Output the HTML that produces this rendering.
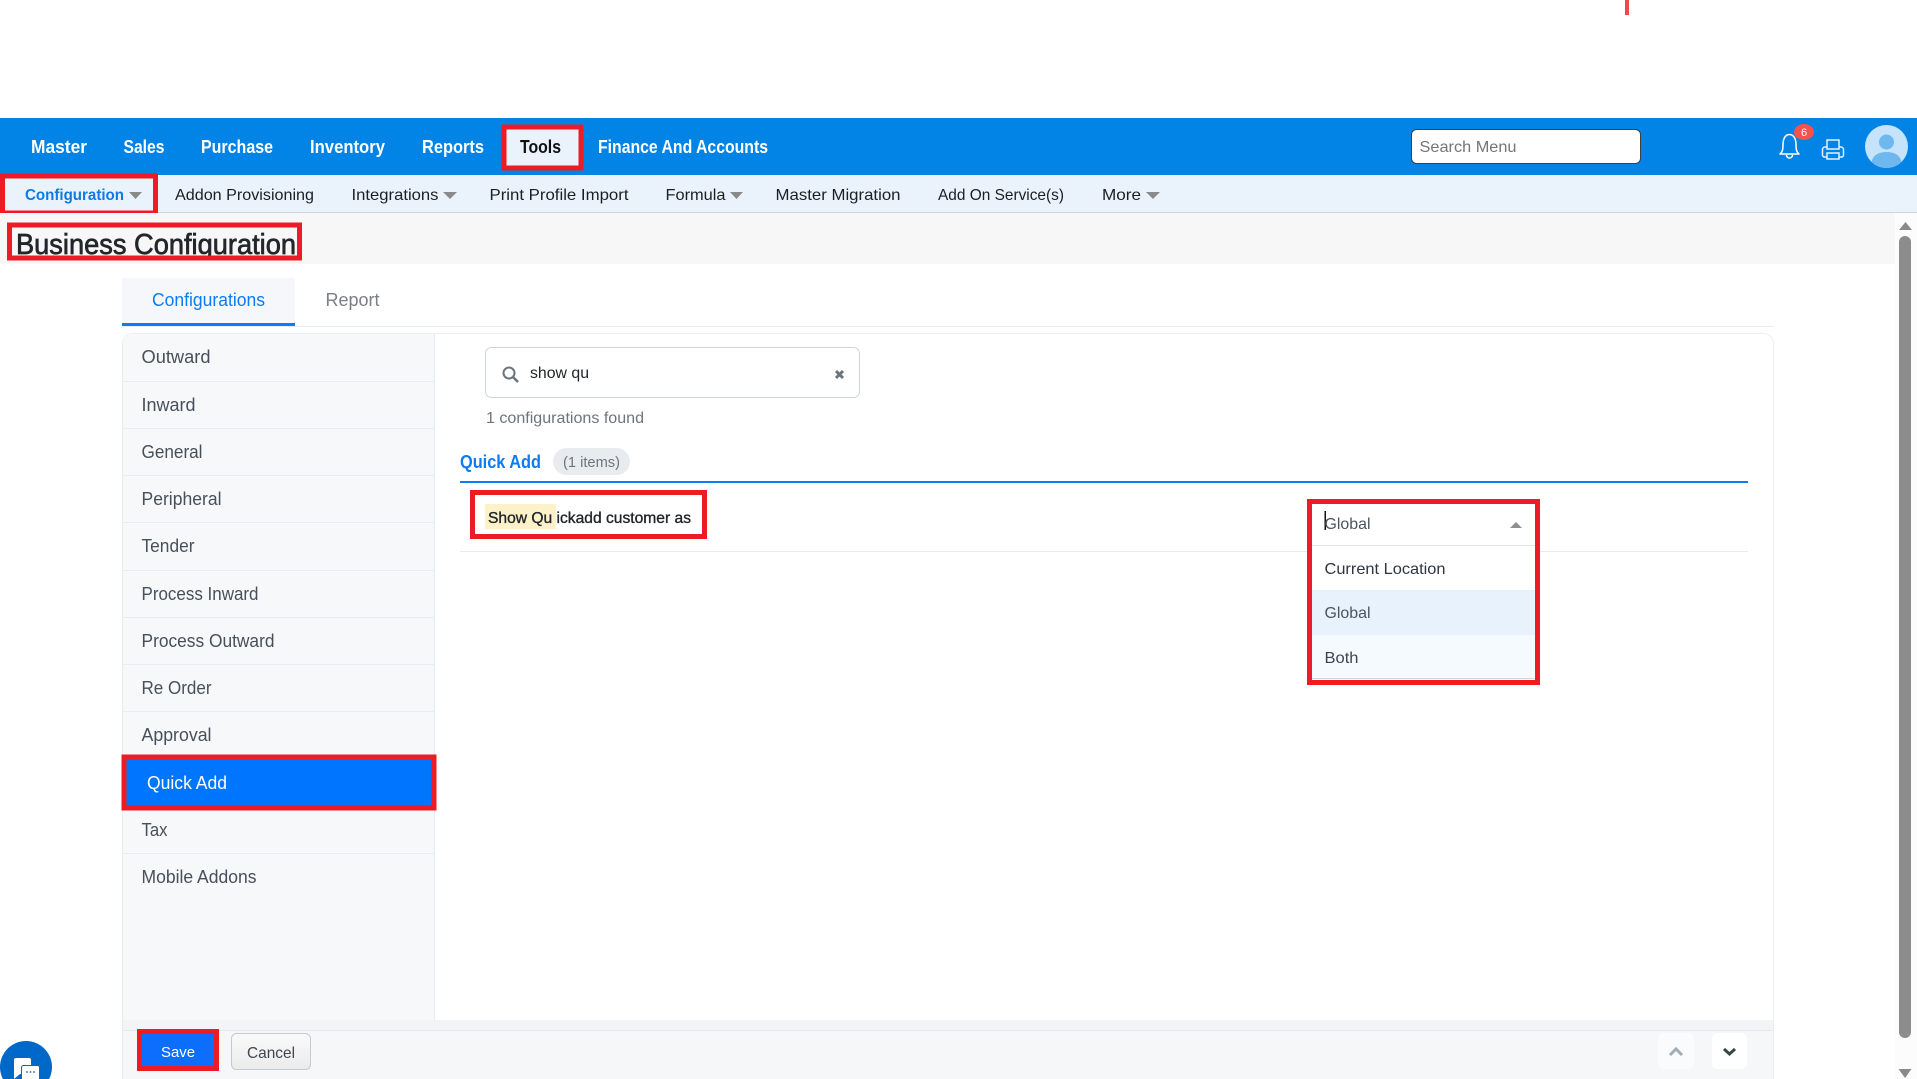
<!DOCTYPE html>
<html lang="en">
<head>
<meta charset="utf-8">
<title>Business Configuration</title>
<style>
html,body{margin:0;padding:0;background:#fff;width:1917px;height:1079px;overflow:hidden}
svg{display:block}
text{font-family:"Liberation Sans",sans-serif;white-space:pre}
.n{font-size:18px;font-weight:700;fill:#fff}
.s{font-size:16px;fill:#1b1f24}
.r{font-size:18px;fill:#47505a}
.b{fill:none;stroke:#ed1c24;stroke-width:5}
.h{fill:#eaedf0}
</style>
</head>
<body>
<svg width="1917" height="1079" viewBox="0 0 1917 1079" xmlns="http://www.w3.org/2000/svg">
<rect width="1917" height="1079" fill="#fff"/>
<rect x="1625" y="0" width="4" height="15" fill="#ee4b44"/>

<!-- top bar -->
<rect y="118" width="1917" height="57" fill="#0283e6"/>
<rect x="503" y="127" width="77" height="41" fill="#eaf3fb"/>
<text class="n" x="31" y="153" textLength="56" lengthAdjust="spacingAndGlyphs">Master</text>
<text class="n" x="123.500" y="153" textLength="41" lengthAdjust="spacingAndGlyphs">Sales</text>
<text class="n" x="201" y="153" textLength="72" lengthAdjust="spacingAndGlyphs">Purchase</text>
<text class="n" x="310" y="153" textLength="75" lengthAdjust="spacingAndGlyphs">Inventory</text>
<text class="n" x="422" y="153" textLength="62" lengthAdjust="spacingAndGlyphs">Reports</text>
<text class="n" x="520" y="153" textLength="41" lengthAdjust="spacingAndGlyphs" style="fill:#111">Tools</text>
<text class="n" x="598" y="153" textLength="170" lengthAdjust="spacingAndGlyphs">Finance And Accounts</text>
<rect class="b" x="504" y="127" width="77" height="41"/>

<!-- search menu -->
<rect x="1411.500" y="129.500" width="229" height="34" rx="5" fill="#fff" stroke="#3c4043"/>
<text x="1419.500" y="152" font-size="16" fill="#757575" textLength="97" lengthAdjust="spacingAndGlyphs">Search Menu</text>

<!-- bell -->
<path d="M1780 154c2.500-2 3-4.500 3-9.500c0-6 2.500-10 6.500-10s6.500 4 6.500 10c0 5 .5 7.500 3 9.500z" fill="none" stroke="#fff" stroke-width="1.500" stroke-linejoin="round"/>
<path d="M1786.500 155a3 3 0 0 0 6 0" fill="none" stroke="#fff" stroke-width="1.500"/>
<ellipse cx="1804" cy="132" rx="10" ry="8" fill="#f4524d"/>
<text x="1804" y="136" font-size="11" fill="#fff" text-anchor="middle">6</text>
<!-- printer -->
<g fill="none" stroke="#e3f1fc" stroke-width="1.500">
<rect x="1827" y="140" width="12" height="9"/>
<path d="M1827 147h-2a2.500 2.500 0 0 0-2.500 2.500v5.500a2 2 0 0 0 2 2h17a2 2 0 0 0 2-2v-5.500a2.500 2.500 0 0 0-2.500-2.500h-2"/>
<rect x="1827" y="153" width="12" height="6" fill="#0283e6"/>
</g>
<!-- avatar -->
<circle cx="1886.500" cy="146.500" r="21.500" fill="#c5e4fb"/>
<circle cx="1886.500" cy="142" r="7.500" fill="#6fb7ef"/>
<path d="M1871.500 162c1.500-7 7-10 15-10s13.500 3 15 10a21.500 21.500 0 0 1-30 0z" fill="#6fb7ef"/>

<!-- sub nav -->
<rect y="175" width="1917" height="37" fill="#eaf3fb"/>
<rect y="212" width="1917" height="1" fill="#c8d6e2"/>
<text class="s" x="25" y="200" textLength="99" lengthAdjust="spacingAndGlyphs" style="fill:#0d7be5;font-weight:700">Configuration</text>
<path d="M129 192h13l-6.500 7z" fill="#8a8a8a"/>
<text class="s" x="175" y="200" textLength="139" lengthAdjust="spacingAndGlyphs">Addon Provisioning</text>
<text class="s" x="351.500" y="200" textLength="87" lengthAdjust="spacingAndGlyphs">Integrations</text>
<path d="M443 192h14l-7 7z" fill="#8a8a8a"/>
<text class="s" x="489.500" y="200" textLength="139" lengthAdjust="spacingAndGlyphs">Print Profile Import</text>
<text class="s" x="665.500" y="200" textLength="60" lengthAdjust="spacingAndGlyphs">Formula</text>
<path d="M730 192h13l-6.500 7z" fill="#8a8a8a"/>
<text class="s" x="775.500" y="200" textLength="125" lengthAdjust="spacingAndGlyphs">Master Migration</text>
<text class="s" x="938" y="200" textLength="126" lengthAdjust="spacingAndGlyphs">Add On Service(s)</text>
<text class="s" x="1102" y="200" textLength="39" lengthAdjust="spacingAndGlyphs">More</text>
<path d="M1146 192h14l-7 7z" fill="#8a8a8a"/>
<rect class="b" x="2.500" y="176" width="153" height="37"/>

<!-- page header -->
<rect y="213" width="1895" height="51" fill="#f7f7f7"/>
<text x="16" y="254" font-size="29" fill="#23272b" stroke="#23272b" stroke-width=".7" textLength="280" lengthAdjust="spacingAndGlyphs">Business Configuration</text>
<rect class="b" x="9.500" y="225" width="290" height="33"/>

<!-- scrollbar -->
<rect x="1895" y="213" width="22" height="866" fill="#fcfcfc"/>
<path d="M1899 230l6.500-8l6.500 8z" fill="#8a8a8a"/>
<rect x="1899" y="236" width="12" height="802" rx="6" fill="#8c8c8c"/>
<path d="M1898.500 1069h13l-6.500 9z" fill="#8a8a8a"/>

<!-- tabs -->
<rect x="122" y="278" width="173" height="45" fill="#f5f7fa"/>
<rect x="122" y="326" width="1652" height="1" fill="#eaecef"/>
<rect x="122" y="323" width="173" height="3" fill="#0d7bf2"/>
<text x="152" y="306" font-size="18" fill="#0d7bf2" textLength="113" lengthAdjust="spacingAndGlyphs">Configurations</text>
<text x="325.500" y="306" font-size="18" fill="#7a7f85" textLength="54" lengthAdjust="spacingAndGlyphs">Report</text>

<!-- panel -->
<rect x="122.500" y="333.500" width="1651" height="760" rx="10" fill="#fff" stroke="#eceef1"/>
<path d="M123 344a10 10 0 0 1 10-10h301v745h-311z" fill="#f7f8fa"/>
<rect x="434" y="334" width="1" height="745" fill="#e8eaed"/>
<rect x="122" y="344" width="1" height="735" fill="#e8eaed"/>
<rect class="h" x="123" y="381" width="311" height="1"/>
<rect class="h" x="123" y="428" width="311" height="1"/>
<rect class="h" x="123" y="475" width="311" height="1"/>
<rect class="h" x="123" y="522" width="311" height="1"/>
<rect class="h" x="123" y="570" width="311" height="1"/>
<rect class="h" x="123" y="617" width="311" height="1"/>
<rect class="h" x="123" y="664" width="311" height="1"/>
<rect class="h" x="123" y="711" width="311" height="1"/>
<rect class="h" x="123" y="853" width="311" height="1"/>
<text class="r" x="141.500" y="363" textLength="69" lengthAdjust="spacingAndGlyphs">Outward</text>
<text class="r" x="141.500" y="411" textLength="54" lengthAdjust="spacingAndGlyphs">Inward</text>
<text class="r" x="141.500" y="458" textLength="61" lengthAdjust="spacingAndGlyphs">General</text>
<text class="r" x="141.500" y="505" textLength="80" lengthAdjust="spacingAndGlyphs">Peripheral</text>
<text class="r" x="141.500" y="552" textLength="53" lengthAdjust="spacingAndGlyphs">Tender</text>
<text class="r" x="141.500" y="600" textLength="117" lengthAdjust="spacingAndGlyphs">Process Inward</text>
<text class="r" x="141.500" y="647" textLength="133" lengthAdjust="spacingAndGlyphs">Process Outward</text>
<text class="r" x="141.500" y="694" textLength="70" lengthAdjust="spacingAndGlyphs">Re Order</text>
<text class="r" x="141.500" y="741" textLength="70" lengthAdjust="spacingAndGlyphs">Approval</text>
<rect x="124" y="757" width="310" height="51" fill="#0075ff"/>
<rect class="b" x="124" y="757" width="310" height="51"/>
<text class="r" x="147" y="789" textLength="80" lengthAdjust="spacingAndGlyphs" style="fill:#fff">Quick Add</text>
<text class="r" x="141.500" y="836" textLength="26" lengthAdjust="spacingAndGlyphs">Tax</text>
<text class="r" x="141.500" y="883" textLength="115" lengthAdjust="spacingAndGlyphs">Mobile Addons</text>

<!-- search field -->
<rect x="485.500" y="347.500" width="374" height="50" rx="6" fill="#fff" stroke="#ced4da"/>
<circle cx="509" cy="373" r="5.500" fill="none" stroke="#6c757d" stroke-width="2"/>
<path d="M513 377l5 5" stroke="#6c757d" stroke-width="2.500"/>
<text x="530" y="378" font-size="16" fill="#212529" textLength="59" lengthAdjust="spacingAndGlyphs">show qu</text>
<path d="M836 371l7 7M843 371l-7 7" stroke="#6c757d" stroke-width="3"/>
<text x="486" y="423" font-size="16" fill="#6c757d" textLength="158" lengthAdjust="spacingAndGlyphs">1 configurations found</text>

<!-- section heading -->
<text x="460" y="468" font-size="18" font-weight="700" fill="#0d7bf2" textLength="81" lengthAdjust="spacingAndGlyphs">Quick Add</text>
<rect x="553" y="448" width="77" height="27" rx="13.500" fill="#e9ecef"/>
<text x="563" y="467" font-size="15" fill="#6c757d" textLength="57" lengthAdjust="spacingAndGlyphs">(1 items)</text>
<rect x="460" y="481" width="1288" height="2" fill="#0d7bf2"/>
<rect x="460" y="551" width="1288" height="1" fill="#e9ecef"/>

<rect x="485" y="504" width="71" height="25" fill="#fdf1c9"/>
<text x="488" y="523" font-size="16" fill="#212529" stroke="#212529" stroke-width=".35" textLength="203" lengthAdjust="spacingAndGlyphs">Show Qu ickadd customer as</text>
<rect class="b" x="472.500" y="492.500" width="232" height="44"/>

<!-- dropdown -->
<rect x="1310" y="502" width="228" height="180" fill="#fff"/>
<rect x="1312" y="545" width="223" height="1" fill="#e4e6e8"/>
<rect x="1312" y="590" width="223" height="45" fill="#e8f2fc"/>
<rect x="1312" y="635" width="223" height="44" fill="#f5faff"/>
<rect x="1312" y="678" width="223" height="1" fill="#d4d4d4"/>
<rect x="1324.500" y="511" width="1.500" height="19" fill="#111"/>
<text x="1324.500" y="529" font-size="16" fill="#4a5560" textLength="46" lengthAdjust="spacingAndGlyphs">Global</text>
<path d="M1510 528l6-6l6 6z" fill="#8f8f8f"/>
<text x="1324.500" y="574" font-size="16" fill="#2d3640" textLength="121" lengthAdjust="spacingAndGlyphs">Current Location</text>
<text x="1324.500" y="618" font-size="16" fill="#4a5560" textLength="46" lengthAdjust="spacingAndGlyphs">Global</text>
<text x="1324.500" y="663" font-size="16" fill="#3c4650" textLength="34" lengthAdjust="spacingAndGlyphs">Both</text>
<rect class="b" x="1309.500" y="501.500" width="228" height="181"/>

<!-- footer -->
<rect x="123" y="1020" width="1650" height="10" fill="#f3f4f6"/>
<rect x="123" y="1030" width="1650" height="1" fill="#e6e8eb"/>
<rect x="123" y="1031" width="1650" height="48" fill="#f6f7f9"/>
<rect x="139.500" y="1031.500" width="77" height="37" fill="#0d6efd"/>
<rect class="b" x="139.500" y="1031.500" width="77" height="37"/>
<text x="161" y="1057" font-size="15" fill="#fff" textLength="34" lengthAdjust="spacingAndGlyphs">Save</text>
<defs><linearGradient id="g" x1="0" y1="0" x2="0" y2="1"><stop offset="0" stop-color="#fafafa"/><stop offset="1" stop-color="#ebebeb"/></linearGradient></defs>
<rect x="231.500" y="1033.500" width="79" height="36" rx="5" fill="url(#g)" stroke="#c6cacd"/>
<text x="247" y="1058" font-size="16" fill="#3f464d" textLength="48" lengthAdjust="spacingAndGlyphs">Cancel</text>
<rect x="1658" y="1033" width="36" height="36" rx="6" fill="#fafbfc"/>
<path d="M1670 1055l6-6l6 6" fill="none" stroke="#a3abb3" stroke-width="3"/>
<rect x="1712" y="1033" width="35" height="36" rx="6" fill="#fff"/>
<path d="M1724 1049l5.500 5l5.500-5" fill="none" stroke="#37474a" stroke-width="3"/>

<!-- chat -->
<circle cx="26" cy="1067" r="26" fill="#0068c8"/>
<path d="M14 1060a2 2 0 0 1 2-2h13a2 2 0 0 1 2 2v14h-11l-6 5z" fill="#fff"/>
<rect x="21.500" y="1065.500" width="18" height="16" rx="2" fill="#fff" stroke="#0068c8"/>
<circle cx="27" cy="1072" r=".9" fill="#0068c8"/><circle cx="30.500" cy="1072" r=".9" fill="#0068c8"/><circle cx="34" cy="1072" r=".9" fill="#0068c8"/>
</svg>
</body>
</html>
